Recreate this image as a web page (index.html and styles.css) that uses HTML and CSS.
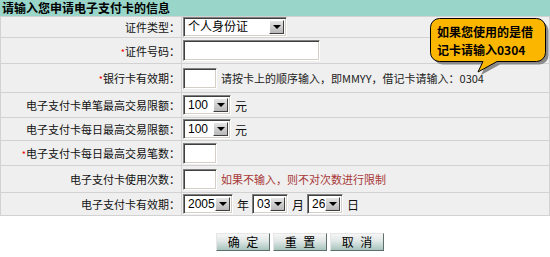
FILE: index.html
```html
<!DOCTYPE html>
<html lang="zh-CN">

<head>
    <meta charset="UTF-8">
    <title>申请电子支付卡</title>
    <link rel="stylesheet" href="styles.css">
</head>

<body>
    <div class="title">请输入您申请电子支付卡的信息</div>
    <table class="form">
        <tr class="h21">
            <td class="label">证件类型：</td>
            <td class="field">
                <span class="combo w-id"><select><option>个人身份证</option></select><span class="arrow"></span></span>
            </td>
        </tr>
        <tr class="h26">
            <td class="label"><span class="star">*</span>证件号码：</td>
            <td class="field"><input type="text" class="txt w-long"></td>
        </tr>
        <tr class="h29">
            <td class="label"><span class="star">*</span>银行卡有效期：</td>
            <td class="field"><input type="text" class="txt w-short"><span class="note">请按卡上的顺序输入，即MMYY，借记卡请输入：0304</span></td>
        </tr>
        <tr class="h25">
            <td class="label">电子支付卡单笔最高交易限额：</td>
            <td class="field">
                <span class="combo w-num"><select><option>100</option></select><span class="arrow"></span></span><span class="unit">元</span>
            </td>
        </tr>
        <tr class="h23">
            <td class="label">电子支付卡每日最高交易限额：</td>
            <td class="field">
                <span class="combo w-num"><select><option>100</option></select><span class="arrow"></span></span><span class="unit">元</span>
            </td>
        </tr>
        <tr class="h25">
            <td class="label"><span class="star">*</span>电子支付卡每日最高交易笔数：</td>
            <td class="field"><input type="text" class="txt w-short"></td>
        </tr>
        <tr class="h27">
            <td class="label">电子支付卡使用次数：</td>
            <td class="field"><input type="text" class="txt w-short"><span class="note warn">如果不输入，则不对次数进行限制</span></td>
        </tr>
        <tr class="h23">
            <td class="label">电子支付卡有效期：</td>
            <td class="field">
                <span class="combo w-year"><select><option>2005</option></select><span class="arrow"></span></span><span class="unit">年</span><span class="combo w-day"><select><option>03</option></select><span class="arrow"></span></span><span class="unit">月</span><span class="combo w-day"><select><option>26</option></select><span class="arrow"></span></span><span class="unit">日</span>
            </td>
        </tr>
    </table>

    <div class="actions">
        <button class="btn">确 定</button>
        <button class="btn">重 置</button>
        <button class="btn">取 消</button>
    </div>

    <div class="tip">
        <svg class="tip-bg" width="120" height="58" viewBox="0 0 120 58">
            <path transform="translate(3,3)" fill="#8a8a8a"
                d="M9.5,0.5 H106.5 A9,9 0 0 1 115.5,9.5 V34.5 A9,9 0 0 1 106.5,43.5 H67 L48,54 L53,43.5 H9.5 A9,9 0 0 1 0.5,34.5 V9.5 A9,9 0 0 1 9.5,0.5 Z" />
            <path fill="#fbb600" stroke="#000" stroke-width="1"
                d="M9.5,0.5 H106.5 A9,9 0 0 1 115.5,9.5 V34.5 A9,9 0 0 1 106.5,43.5 H67 L48,54 L53,43.5 H9.5 A9,9 0 0 1 0.5,34.5 V9.5 A9,9 0 0 1 9.5,0.5 Z" />
        </svg>
        <div class="tip-text">如果您使用的是借<br>记卡请输入0304</div>
    </div>
</body>

</html>
```

FILE: styles.css
```css
body {
    margin: 0;
    font-family: "Noto Sans CJK SC", "Liberation Sans", sans-serif;
    font-size: 11px;
    color: #111;
    background: #fff;
    position: relative;
}

.title {
    background-color: #99d5c9;
    height: 16px;
    line-height: 16px;
    padding-left: 2px;
    font-size: 12px;
    font-weight: bold;
    color: #000;
}

.form {
    width: 100%;
    border-collapse: collapse;
    background-color: #efefef;
}

.form td {
    border: 1px solid #d2d2d2;
    padding: 0;
    white-space: nowrap;
}

.form td.label {
    width: 179px;
    text-align: right;
    padding-right: 1px;
}

.form td.field {
    padding-left: 1px;
}

.h21 td { height: 20px; }
.h23 td { height: 22px; }
.h25 td { height: 24px; }
.h26 td { height: 25px; }
.h27 td { height: 26px; }
.h29 td { height: 28px; }

.star {
    color: #e00;
    font-size: 9px;
}

/* classic sunken field */
.txt,
.combo {
    box-sizing: border-box;
    border: 1px solid;
    border-color: #808080 #fff #fff #808080;
    box-shadow: inset 1px 1px 0 #404040, inset -1px -1px 0 #d4d0c8;
    background: #fff;
    vertical-align: middle;
}

.txt {
    height: 21px;
    padding: 0 3px;
    font-size: 12px;
    margin: 0;
}

.w-long { width: 137px; }
.w-short { width: 34px; }

.combo {
    display: inline-flex;
    align-items: stretch;
    height: 20px;
    padding: 2px;
}

.combo select {
    -webkit-appearance: none;
    appearance: none;
    flex: 1;
    min-width: 0;
    border: 0;
    background: transparent;
    padding: 0 0 0 2px;
    margin: 0;
    font-family: "Liberation Sans", "Noto Sans CJK SC", sans-serif;
    font-size: 12px;
    color: #000;
    line-height: 14px;
}

.w-id { width: 104px; }
.w-num { width: 48px; }
.w-year { width: 50px; }
.w-day { width: 36px; }

.arrow {
    width: 15px;
    box-sizing: border-box;
    border: 1px solid;
    border-color: #fff #404040 #404040 #fff;
    background: linear-gradient(#e4e4e4, #b8b8b8);
    display: flex;
    align-items: center;
    justify-content: center;
}

.arrow::after {
    content: "";
    border-left: 4px solid transparent;
    border-right: 4px solid transparent;
    border-top: 4px solid #000;
}

.unit {
    display: inline-block;
    margin: 0 3px 0 4px;
    vertical-align: middle;
    font-size: 12px;
}

.note {
    margin-left: 4px;
    vertical-align: middle;
    color: #222;
}

.note.warn {
    color: #a83838;
}

.actions {
    padding: 17px 0 0 50px;
    display: flex;
    justify-content: center;
    gap: 3px;
}

.btn {
    width: 54px;
    height: 18px;
    padding: 0;
    border: 1px solid;
    border-color: #e6e6e6 #5e6e6a #5e6e6a #e6e6e6;
    background: linear-gradient(#f6f6f6, #dfe7e5 45%, #a7c4bd);
    font-family: "Noto Sans CJK SC", sans-serif;
    font-size: 12px;
    line-height: 16px;
    word-spacing: 4px;
    color: #000;
}

.tip {
    position: absolute;
    left: 430px;
    top: 18px;
    width: 120px;
    height: 58px;
}

.tip-bg {
    position: absolute;
    left: 0;
    top: 0;
}

.tip-text {
    position: relative;
    padding: 5px 0 0 7px;
    font-size: 12px;
    font-weight: bold;
    line-height: 18px;
    color: #000;
}
```
